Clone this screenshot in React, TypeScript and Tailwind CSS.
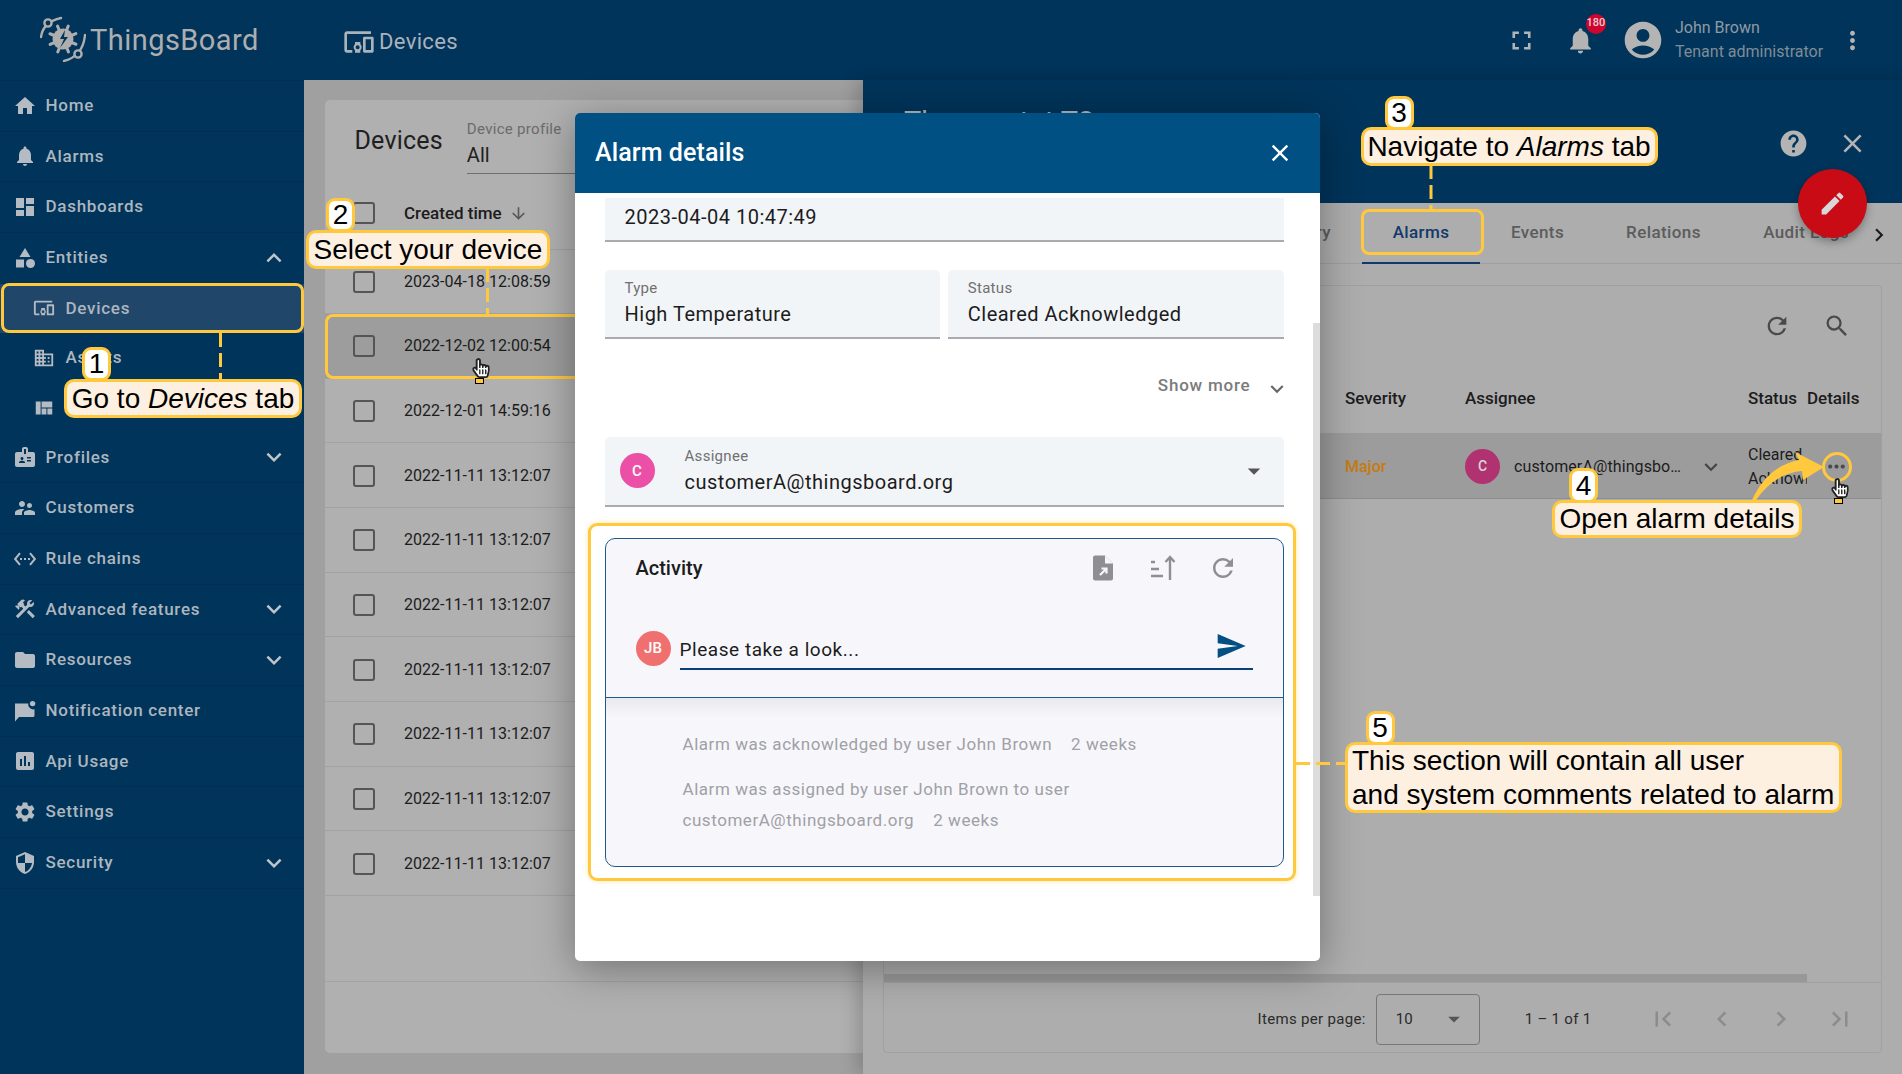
import React from "react";
import {
  MdHome, MdNotifications, MdDashboard, MdCategory, MdDevicesOther, MdDomain, MdViewQuilt, MdBadge,
  MdSupervisorAccount, MdSettingsEthernet, MdConstruction, MdFolder, MdAssessment,
  MdSettings, MdSecurity, MdExpandMore, MdExpandLess, MdFullscreen, MdAccountCircle, MdMoreVert, MdHelp,
  MdClose, MdEdit, MdRefresh, MdSearch, MdArrowDownward, MdSend, MdFirstPage, MdLastPage, MdChevronLeft,
  MdChevronRight, MdMoreHoriz, MdArrowDropDown, MdKeyboardArrowDown,
} from "react-icons/md";
import { FaHandPointer, FaRegHandPointer } from "react-icons/fa";

function NotifIcon({ size, className }: { size?: number; className?: string }) {
  return (
    <svg width={size} height={size} viewBox="0 0 24 24" className={className} fill="currentColor">
      <path d="M2 4.5H15.2A5.2 5.2 0 0 0 21.5 10.3V16.5A1.5 1.5 0 0 1 20 18H6L2 22.5Z" />
      <circle cx="19.6" cy="4.6" r="2.7" />
    </svg>
  );
}

const top = [
  { l: "Home", i: MdHome },
  { l: "Alarms", i: MdNotifications },
  { l: "Dashboards", i: MdDashboard },
];
const bottom = [
  { l: "Profiles", i: MdBadge, c: true },
  { l: "Customers", i: MdSupervisorAccount },
  { l: "Rule chains", i: MdSettingsEthernet },
  { l: "Advanced features", i: MdConstruction, c: true },
  { l: "Resources", i: MdFolder, c: true },
  { l: "Notification center", i: NotifIcon },
  { l: "Api Usage", i: MdAssessment },
  { l: "Settings", i: MdSettings },
  { l: "Security", i: MdSecurity, c: true },
];
const rows = [
  "2023-04-18 12:08:59", "2022-12-02 12:00:54", "2022-12-01 14:59:16", "2022-11-11 13:12:07", "2022-11-11 13:12:07",
  "2022-11-11 13:12:07", "2022-11-11 13:12:07", "2022-11-11 13:12:07", "2022-11-11 13:12:07", "2022-11-11 13:12:07",
];

function NavRow({ l, i: Icon, c }: { l: string; i: React.ComponentType<{ size?: number; className?: string }>; c?: boolean }) {
  return (
    <div className="flex h-[50.67px] items-center border-b border-[#002f50] pl-[12.5px] pr-[15px]">
      <Icon size={24} className="shrink-0 text-[#b4bbc2]" />
      <span className="ml-[9px] flex-1 text-[17px] font-medium tracking-[0.72px] text-[#adb6bf]">{l}</span>
      {c && <MdExpandMore size={30} className="text-[#c0c5ca]" />}
    </div>
  );
}

function SubRow({ l, i: Icon, active }: { l: string; i: React.ComponentType<{ size?: number; className?: string }>; active?: boolean }) {
  return (
    <div className={`flex h-[49.67px] items-center pl-[33px] ${active ? "bg-[#20466a]" : ""}`}>
      <Icon size={22} className="shrink-0 text-[#b4bbc2]" />
      <span className="ml-[10.5px] text-[17px] font-medium tracking-[0.72px] text-[#adb6bf]">{l}</span>
    </div>
  );
}

function Check() {
  return <span className="block h-[22px] w-[22px] shrink-0 rounded-[3px] border-2 border-[#555]" />;
}

function Hand({ className }: { className: string }) {
  return (
    <div className={`absolute flex h-[27px] w-[17px] flex-col items-center ${className}`}>
      <div className="relative h-[20px] w-[17px]">
        <FaHandPointer size={20} className="absolute left-0 top-0 text-white" />
        <FaRegHandPointer size={20} className="absolute left-0 top-0 text-[#222]" />
      </div>
      <span className="block h-[6px] w-[9px] border border-black bg-[#ffc83d]" />
    </div>
  );
}

function Badge({ n, className }: { n: string; className: string }) {
  return (
    <div className={`absolute z-20 flex items-center justify-center rounded-[9px] border-[3px] border-[#ffc83d] bg-white font-['Liberation_Sans'] text-[28px] text-black ${className}`}>
      {n}
    </div>
  );
}

function Label({ children, className }: { children: React.ReactNode; className: string }) {
  return (
    <div className={`absolute z-10 flex items-center whitespace-nowrap rounded-[10px] border-[3px] border-[#ffc83d] bg-[#fdf0e0] font-['Liberation_Sans'] text-[28px] text-black ${className}`}>
      {children}
    </div>
  );
}

function Field({ label, value, className }: { label: string; value: string; className: string }) {
  return (
    <div className={`flex h-[69.5px] flex-col rounded-t-[5px] border-b-2 border-[#a9abae] bg-[#f2f5f8] pl-[20px] ${className}`}>
      <span className="mt-[8px] text-[15px] leading-[21px] tracking-[0.3px] text-[#707070]">{label}</span>
      <span className="mt-[1px] text-[20px] leading-[28px] tracking-[0.5px] text-[#1c1c1c]">{value}</span>
    </div>
  );
}

function Logo() {
  const teeth = [0, 45, 90, 135, 180, 225, 270, 315];
  return (
    <svg width="46" height="46" viewBox="0 0 46 46" className="shrink-0">
      <g stroke="#aeaeae" fill="none" strokeWidth="2.4" strokeLinecap="round">
        <path d="M1 21 Q3 6 21 2" />
        <circle cx="8" cy="7" r="3.6" fill="#00345a" />
        <path d="M45 19 Q43 40 24 45" />
        <circle cx="38" cy="38" r="3.6" fill="#00345a" />
      </g>
      <g stroke="#aeaeae" strokeWidth="3" strokeLinecap="round">
        {teeth.map((t) => (
          <line key={t} x1="23" y1="23" x2="23" y2="9" transform={`rotate(${t + 22} 23 23)`} />
        ))}
      </g>
      <circle cx="23" cy="23" r="10.5" fill="#aeaeae" />
      <path d="M25 14 L20 23 L24 23 L20 32 L28 21 L24 21 Z" fill="#00345a" />
    </svg>
  );
}

export default function App() {
  return (
    <div className="relative flex h-[1074px] w-[1902px] overflow-hidden bg-[#a0a0a0] font-['Roboto',sans-serif]">
      {/* Sidebar */}
      <aside className="flex w-[304px] shrink-0 flex-col bg-[#00345a]">
        <div className="flex h-[81px] shrink-0 items-center border-b border-[#002f50] pb-[3px] pl-[40px]">
          <Logo />
          <span className="ml-[4px] mt-[4px] text-[29px] tracking-[0.45px] text-[#aeaeae]">ThingsBoard</span>
        </div>
        {top.map((r) => (
          <NavRow key={r.l} {...r} />
        ))}
        <div className="flex h-[50.67px] items-center border-b border-[#002f50] pl-[12.5px] pr-[15px]">
          <MdCategory size={24} className="shrink-0 text-[#b4bbc2]" />
          <span className="ml-[9px] flex-1 text-[17px] font-medium tracking-[0.72px] text-[#adb6bf]">Entities</span>
          <MdExpandLess size={30} className="text-[#c0c5ca]" />
        </div>
        <SubRow l="Devices" i={MdDevicesOther} active />
        <SubRow l="Assets" i={MdDomain} />
        <SubRow l="Entity Views" i={MdViewQuilt} />
        {bottom.map((r) => (
          <NavRow key={r.l} {...r} />
        ))}
      </aside>

      {/* Main */}
      <main className="flex min-w-0 flex-1 flex-col">
        <header className="flex h-[80px] shrink-0 items-center bg-[#00345a] pl-[39px]">
          <MdDevicesOther size={32} className="mt-[3px] text-[#aab2ba]" />
          <span className="ml-[4px] mt-[3px] text-[22px] tracking-[0.35px] text-[#aab2ba]">Devices</span>
          <div className="ml-auto flex items-center">
            <div className="flex w-[59px] justify-center"><MdFullscreen size={31} className="text-[#b4b4b4]" /></div>
            <div className="relative flex w-[59px] justify-center">
              <MdNotifications size={31} className="text-[#b4b4b4]" />
              <span className="absolute left-[35px] top-[-11px] flex h-[20px] w-[20px] items-center justify-center rounded-full bg-[#cf0530] text-[11px] font-medium text-[#e8d0d0]">180</span>
            </div>
            <div className="ml-[11px] mr-[10px] flex h-[44px] w-[44px] items-center justify-center"><MdAccountCircle size={44} className="text-[#b4b4b4]" /></div>
            <div className="flex w-[147px] flex-col whitespace-nowrap">
              <span className="text-[16px] leading-[24px] text-[#8f9aa4]">John Brown</span>
              <span className="text-[16px] leading-[24px] text-[#7f8c97]">Tenant administrator</span>
            </div>
            <div className="flex w-[60px] justify-center"><MdMoreVert size={29} className="text-[#b4b4b4]" /></div>
            <div className="w-[20px]" />
          </div>
        </header>

        <div className="flex min-h-0 flex-1">
          {/* Left panel */}
          <section className="w-[559px] shrink-0 pb-[21px] pl-[21px] pt-[20px]">
            <div className="flex h-full flex-col rounded-bl-[5px] rounded-tl-[5px] bg-[#b0b0b0]">
              <div className="flex h-[80px] shrink-0 items-start pl-[29.5px]">
                <span className="mt-[25px] text-[25px] leading-[32px] tracking-[0.2px] text-[#202020]">Devices</span>
                <div className="ml-[24px] flex h-[74px] w-[110px] flex-col border-b border-[#6f6f6f]">
                  <span className="mt-[20px] text-[15px] leading-[18px] tracking-[0.3px] text-[#6b6b6b]">Device profile</span>
                  <span className="mt-[5px] text-[20px] leading-[24px] text-[#202020]">All</span>
                </div>
              </div>
              <div className="flex h-[69.5px] shrink-0 items-center border-b border-[#a2a2a2] pb-[2px] pl-[28px]">
                <Check />
                <span className="ml-[29px] text-[17px] font-medium text-[#1c1c1c]">Created time</span>
                <MdArrowDownward size={19} className="ml-[7px] text-[#555]" />
              </div>
              {rows.map((d, i) => (
                <div key={i} className={`flex h-[64.67px] shrink-0 items-center border-b border-[#a2a2a2] pl-[28px] pt-[1px] ${i === 1 ? "bg-[#9d9d9d]" : ""}`}>
                  <Check />
                  <span className="ml-[29px] text-[16px] tracking-[0.02px] text-[#1c1c1c]">{d}</span>
                </div>
              ))}
              <div className="mt-auto h-[72px] border-t border-[#a2a2a2]" />
            </div>
          </section>

          {/* Right panel */}
          <section className="relative flex min-w-0 flex-1 flex-col bg-[#adadad] shadow-[-6px_0_16px_rgba(0,0,0,0.18)]">
            <div className="relative flex h-[123px] shrink-0 items-start bg-[#00345a]">
              <span className="ml-[41px] mt-[22px] text-[29px] leading-[40px] text-[#b0b6bc]">Thermostat T2</span>
              <div className="ml-auto mr-[34px] mt-[48px] flex items-center gap-[28px]">
                <MdHelp size={31} className="text-[#b4b4b4]" />
                <MdClose size={31} className="text-[#b4b4b4]" />
              </div>
              <div className="absolute left-[935px] top-[89px] z-[5] flex h-[69px] w-[69px] items-center justify-center rounded-full bg-[#c90b16] shadow-[0_4px_8px_rgba(0,0,0,0.3)]">
                <MdEdit size={29} className="text-[#d8d8d8]" />
              </div>
            </div>
            <div className="flex h-[61px] shrink-0 items-center justify-end border-b border-[#9f9f9f] text-[17px] font-medium tracking-[0.4px] text-[#5c5c5c]">
              <span className="px-[31px]">History</span>
              <span className="relative flex h-full w-[118px] items-center justify-center text-[#12396a]">
                Alarms
                <span className="absolute bottom-[-1px] left-0 h-[2px] w-full bg-[#12386a]" />
              </span>
              <span className="w-[115px] text-center">Events</span>
              <span className="w-[137px] text-center">Relations</span>
              <span className="w-[148px] text-center">Audit Logs</span>
              <MdChevronRight size={26} className="z-[1] -ml-[14px] mr-[10px] mt-[3px] shrink-0 text-[#1c1c1c]" />
            </div>
            <div className="flex min-h-0 flex-1 flex-col pb-[21px] pl-[20px] pr-[20px] pt-[21px]">
              <div className="flex h-full flex-col rounded-[4px] border border-[#a0a0a0]">
                <div className="flex h-[80px] shrink-0 items-center justify-end pr-[30px]">
                  <MdRefresh size={28} className="mr-[32px] text-[#4a4a4a]" />
                  <MdSearch size={28} className="text-[#4a4a4a]" />
                </div>
                <div className="flex h-[68px] shrink-0 items-center border-b border-[#9c9c9c] pb-[2px] pl-[461px] text-[17px] font-medium text-[#1c1c1c]">
                  <span className="w-[120px]">Severity</span>
                  <span className="w-[283px]">Assignee</span>
                  <span className="w-[59px]">Status</span>
                  <span>Details</span>
                </div>
                <div className="flex h-[65px] shrink-0 items-center border-b border-[#8e8e8e] bg-[#9c9c9c] pl-[461px] pt-[1px] text-[16px] text-[#1c1c1c]">
                  <span className="w-[120px] font-medium text-[#c77a10]">Major</span>
                  <div className="flex w-[283px] items-center">
                    <span className="flex h-[35px] w-[35px] items-center justify-center rounded-full bg-[#b03270] text-[14px] font-medium text-[#d8d8d8]">C</span>
                    <span className="ml-[14px] w-[172px] tracking-[0.1px]">customerA@thingsbo…</span>
                    <MdKeyboardArrowDown size={26} className="ml-[12px] text-[#444]" />
                  </div>
                  <div className="flex w-[59px] flex-col overflow-hidden whitespace-nowrap leading-[24px]">
                    <span>Cleared</span>
                    <span>Acknowledged</span>
                  </div>
                  <div className="ml-[14px] flex h-[30px] w-[30px] items-center justify-center">
                    <MdMoreHoriz size={25} className="text-[#4a4a4a]" />
                  </div>
                </div>
                <div className="flex-1" />
                <div className="h-[8px] w-[923px] shrink-0 bg-[#989898]" />
                <div className="flex h-[70px] shrink-0 items-center justify-end border-t border-[#a0a0a0] pr-[11.5px] pt-[3px] text-[15px] text-[#2a2a2a]">
                  <span className="tracking-[0.32px]">Items per page:</span>
                  <div className="ml-[10px] flex h-[51px] w-[104px] items-center justify-between rounded-[4px] border border-[#777] pl-[19px] pr-[11px]">
                    <span className="text-[15px]">10</span>
                    <MdArrowDropDown size={28} className="text-[#555]" />
                  </div>
                  <span className="ml-[45px] mr-[42px] tracking-[0.3px]">1 – 1 of 1</span>
                  <div className="flex w-[59px] justify-center"><MdFirstPage size={30} className="text-[#8c8c8c]" /></div>
                  <div className="flex w-[59px] justify-center"><MdChevronLeft size={30} className="text-[#8c8c8c]" /></div>
                  <div className="flex w-[59px] justify-center"><MdChevronRight size={30} className="text-[#8c8c8c]" /></div>
                  <div className="flex w-[59px] justify-center"><MdLastPage size={30} className="text-[#8c8c8c]" /></div>
                </div>
              </div>
            </div>
          </section>
        </div>
      </main>

      {/* Modal */}
      <div className="absolute left-[575px] top-[113px] z-[6] flex h-[848px] w-[745px] flex-col overflow-hidden rounded-[5px] bg-white shadow-[0_8px_40px_rgba(0,0,0,0.35)]">
        <div className="flex h-[80px] shrink-0 items-center justify-between bg-[#005083] pl-[20px] pr-[26px]">
          <span className="text-[25px] font-medium tracking-[0.1px] text-white">Alarm details</span>
          <MdClose size={28} className="text-white" />
        </div>
        <div className="relative flex-1 pl-[29.5px] pr-[36.5px] pt-[5px]">
          <span className="absolute left-[738px] top-[130px] h-[573px] w-[7px] bg-[#dcdcdc]" />
          <div className="flex h-[43.5px] items-center border-b-2 border-[#a9abae] bg-[#f2f5f8] pb-[4px] pl-[20px] text-[20px] tracking-[0.5px] text-[#1c1c1c]">
            2023-04-04 10:47:49
          </div>
          <div className="mt-[28px] flex gap-[7.5px]">
            <Field label="Type" value="High Temperature" className="flex-1" />
            <Field label="Status" value="Cleared Acknowledged" className="flex-1" />
          </div>
          <div className="mt-[33px] flex h-[27px] items-center justify-end text-[17px] font-medium tracking-[0.78px] text-[#7b7b7b]">
            <span>Show more</span>
            <MdKeyboardArrowDown size={26} className="ml-[13px] mr-[-6px] mt-[6px] text-[#666]" />
          </div>
          <div className="mt-[38px] flex h-[69.5px] items-center rounded-t-[5px] border-b-2 border-[#a9abae] bg-[#f2f5f8] pl-[15px] pr-[18px]">
            <span className="flex h-[35px] w-[35px] shrink-0 items-center justify-center rounded-full bg-[#ec50a6] text-[15px] font-medium text-white">C</span>
            <div className="ml-[30px] flex flex-1 flex-col">
              <span className="text-[15px] leading-[20px] tracking-[0.3px] text-[#707070]">Assignee</span>
              <span className="mt-[3px] text-[20px] leading-[26px] tracking-[0.5px] text-[#1c1c1c]">customerA@thingsboard.org</span>
            </div>
            <MdArrowDropDown size={30} className="mr-[-3px] text-[#555]" />
          </div>
          <div className="mt-[31px] flex h-[329px] flex-col overflow-hidden rounded-[10px] border border-[#1f5a8c] bg-[#f7f7fb]">
            <div className="h-[159.5px] shrink-0 border-b border-[#1f5a8c]">
              <div className="flex h-[58px] items-center pl-[30px]">
                <span className="w-[70px] whitespace-nowrap text-[20px] font-medium leading-[60px] text-[#1c1c1c]">Activity</span>
                <div className="ml-[367px] flex w-[60px] justify-center">
                  <svg width="22" height="26" viewBox="0 0 22 26">
                    <path d="M3 0.5H13L21 8.5V23.5A2 2 0 0 1 19 25.5H3A2 2 0 0 1 1 23.5V2.5A2 2 0 0 1 3 0.5Z" fill="#8f8f92" />
                    <path d="M13 0.5V8.5H21Z" fill="#f7f7fb" />
                    <path d="M8 20L13.5 14.5M9.5 13.5H14.5V18.5" stroke="#f7f7fb" strokeWidth="2.2" fill="none" />
                  </svg>
                </div>
                <div className="flex w-[60px] justify-center">
                  <svg width="26" height="26" viewBox="0 0 26 26" stroke="#8f8f92" strokeWidth="2.4" fill="none">
                    <path d="M1 7H5M1 14H9M1 21H13" />
                    <path d="M20 25V2M15.5 7L20 2L24.5 7" />
                  </svg>
                </div>
                <div className="flex w-[60px] justify-center"><MdRefresh size={30} className="text-[#8f8f92]" /></div>
              </div>
              <div className="ml-[30px] mr-[30px] mt-[30px] flex items-center">
                <span className="flex h-[35px] w-[35px] shrink-0 items-center justify-center rounded-full bg-[#f07070] text-[15px] font-medium text-white">JB</span>
                <div className="ml-[9px] flex h-[43px] flex-1 items-center justify-between border-b-2 border-[#0a3f78] pt-[6px]">
                  <span className="text-[19px] tracking-[0.55px] text-[#1c1c1c]">Please take a look...</span>
                  <MdSend size={32} className="mb-[8px] mr-[6px] text-[#034f83]" />
                </div>
              </div>
            </div>
            <div className="h-[20px] shrink-0 bg-gradient-to-b from-[#e8e8ee] to-[#f7f7fb]" />
            <div className="pl-[77px] text-[17px] tracking-[0.55px] text-[#a0a0a6]">
              <div className="mt-[15px] flex h-[24px] items-center gap-[19px]">
                <span>Alarm was acknowledged by user John Brown</span>
                <span>2 weeks</span>
              </div>
              <div className="mt-[21px] flex h-[24px] items-center">Alarm was assigned by user John Brown to user</div>
              <div className="mt-[7px] flex h-[24px] items-center gap-[19px]">
                <span>customerA@thingsboard.org</span>
                <span>2 weeks</span>
              </div>
            </div>
          </div>
        </div>
      </div>

      {/* Annotations */}
      <div className="absolute left-[1px] top-[283px] z-10 h-[50px] w-[303px] rounded-[8px] border-[3px] border-[#ffc83d]" />
      <div className="absolute left-[325px] top-[314px] z-[4] h-[64.5px] w-[260px] rounded-l-[8px] border-y-[3px] border-l-[3px] border-[#ffc83d]" />
      <div className="absolute left-[1361px] top-[209px] z-10 h-[46px] w-[123px] rounded-[8px] border-[3px] border-[#ffc83d]" />
      <div className="absolute left-[1821.5px] top-[451.5px] z-10 h-[30px] w-[30px] rounded-full border-[3px] border-[#ffc83d]" />
      <div className="absolute left-[588px] top-[522.5px] z-10 h-[358px] w-[708px] rounded-[9px] border-[3px] border-[#ffc83d] shadow-[0_0_5px_rgba(255,200,61,0.45)]" />

      <svg className="pointer-events-none absolute left-0 top-0 z-[9]" width="1902" height="1074" viewBox="0 0 1902 1074">
        <g stroke="#ffc83d" strokeWidth="3" strokeDasharray="14 6" fill="none">
          <line x1="220.5" y1="333" x2="220.5" y2="379" />
          <line x1="487.5" y1="268" x2="487.5" y2="314" />
          <line x1="1431" y1="165" x2="1431" y2="209" />
          <line x1="1296" y1="763.5" x2="1345" y2="763.5" />
        </g>
        <path d="M1752 500 Q1768 466 1799 460 L1795 452 L1824 467 L1803 480 L1802 471 Q1775 473 1756 500 Z" fill="#ffc83d" />
      </svg>

      <Label className="left-[64px] top-[379px] h-[39px] w-[238px] justify-center">
        <span>Go to <i>Devices</i> tab</span>
      </Label>
      <Badge n="1" className="left-[82px] top-[347px] h-[34px] w-[29px]" />
      <Label className="left-[306px] top-[230px] h-[39px] w-[244px] justify-center">Select your device</Label>
      <Badge n="2" className="left-[326px] top-[198px] h-[34px] w-[29px]" />
      <Label className="left-[1360.5px] top-[127px] h-[39px] w-[297px] justify-center">
        <span>Navigate to <i>Alarms</i> tab</span>
      </Label>
      <Badge n="3" className="left-[1384.5px] top-[96px] h-[34px] w-[29px]" />
      <Label className="left-[1552px] top-[500px] h-[38px] w-[250px] justify-center">Open alarm details</Label>
      <Badge n="4" className="left-[1569px] top-[468px] h-[35px] w-[29px]" />
      <Label className="left-[1345px] top-[742px] h-[71px] w-[497px] pl-[4px] leading-[34px]">
        <span>This section will contain all user<br />and system comments related to alarm</span>
      </Label>
      <Badge n="5" className="left-[1365.5px] top-[711px] h-[34px] w-[29px]" />

      <div className="z-30"><Hand className="left-[471px] top-[358px] z-30" /><Hand className="left-[1830px] top-[478px] z-30" /></div>
    </div>
  );
}
